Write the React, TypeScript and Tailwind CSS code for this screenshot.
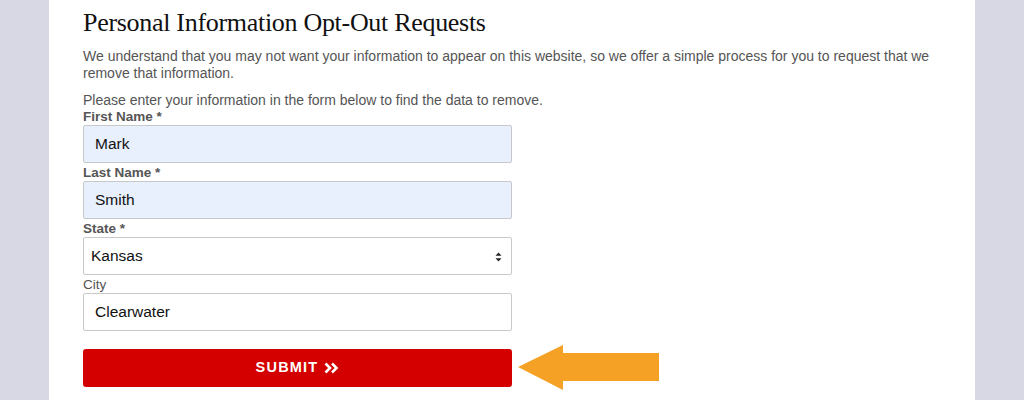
import React from 'react';

const labelCls = "block text-[13.5px] leading-[16px] font-bold text-[#555]";

const Field: React.FC<{ label: string; value: string; autofill?: boolean; bold?: boolean }> = ({ label, value, autofill, bold = true }) => (
  <div>
    <label className={bold ? labelCls : "block text-[13.5px] leading-[16px] text-[#555]"}>{label}</label>
    <input
      readOnly
      value={value}
      className={`block w-full h-[38px] border border-[#c8c8c8] rounded-[2px] px-[11px] text-[15.5px] text-[#111] outline-none ${autofill ? 'bg-[#e8f0fe]' : 'bg-white'}`}
    />
  </div>
);

export default function App() {
  return (
    <div className="w-full h-[400px] bg-[#d8d8e5] flex justify-center overflow-hidden" style={{ fontFamily: '"Liberation Sans", Arial, sans-serif' }}>
      <div className="w-[926px] h-full bg-white pl-[34px] pr-[34px]">
        <h1 className="text-[26px] leading-[32px] pt-[7px] tracking-[-0.3px] text-[#111]" style={{ fontFamily: '"Liberation Serif", "Times New Roman", serif' }}>
          Personal Information Opt-Out Requests
        </h1>
        <p className="mt-[9px] text-[14px] leading-[17px] text-[#555]">
          We understand that you may not want your information to appear on this website, so we offer a simple process for you to request that we remove that information.
        </p>
        <p className="mt-[10px] text-[14px] leading-[17px] text-[#555]">
          Please enter your information in the form below to find the data to remove.
        </p>

        <div className="w-[429px] flex flex-col gap-[2px]">
          <Field label="First Name *" value="Mark" autofill />
          <Field label="Last Name *" value="Smith" autofill />
          <div>
            <label className={labelCls}>State *</label>
            <div className="relative h-[38px] border border-[#c8c8c8] rounded-[2px] bg-white flex items-center pl-[7px] text-[15.5px] text-[#111]">
              Kansas
              <svg className="absolute right-[9px] top-[14px]" width="7" height="10" viewBox="0 0 7 10">
                <path d="M3.5 0.5 L6.5 3.8 H0.5 Z" fill="#222" />
                <path d="M3.5 9.5 L6.5 6.2 H0.5 Z" fill="#222" />
              </svg>
            </div>
          </div>
          <Field label="City" value="Clearwater" bold={false} />
        </div>

        <div className="relative w-[429px] mt-[18px]">
          <button className="w-full h-[38px] bg-[#d40000] rounded-[3px] text-white text-[14.5px] font-bold tracking-[1.2px] flex items-center justify-center gap-[6px]">
            SUBMIT
            <svg width="15" height="12" viewBox="0 0 15 12">
              <path d="M1.5 1.5 L6 6 L1.5 10.5 M8 1.5 L12.5 6 L8 10.5" fill="none" stroke="#fff" strokeWidth="2.6" />
            </svg>
          </button>
          <svg className="absolute left-[435px] -top-[4px]" width="142" height="46" viewBox="0 0 142 46">
            <path d="M0 22 L45 0 L45 8 L141 8 L141 36 L45 36 L45 45 Z" fill="#f5a125" />
          </svg>
        </div>
      </div>
    </div>
  );
}
